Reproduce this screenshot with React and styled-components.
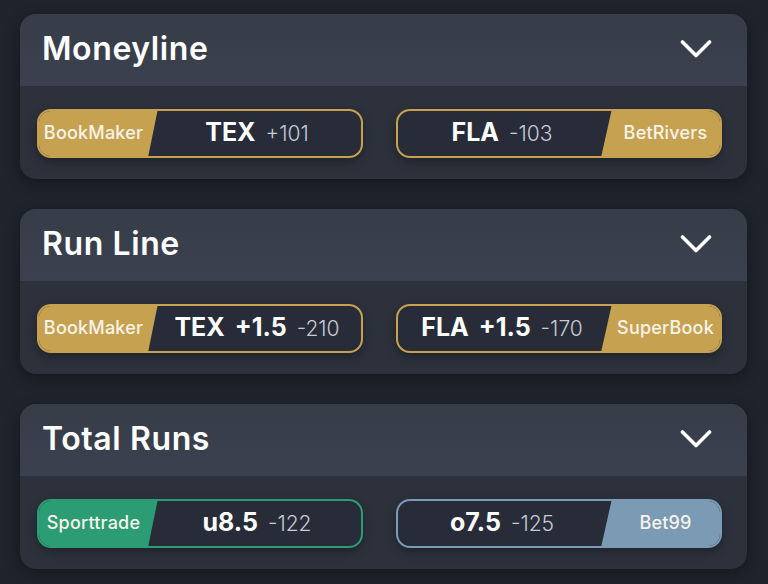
import React from "react";
//Styling
import styled, { createGlobalStyle } from "styled-components";

const markets = [
  {
    title: "Moneyline",
    picks: [
      { book: "BookMaker", side: "left", color: "gold", label: ["TEX"], odds: "+101" },
      { book: "BetRivers", side: "right", color: "gold", label: ["FLA"], odds: "-103" },
    ],
  },
  {
    title: "Run Line",
    picks: [
      { book: "BookMaker", side: "left", color: "gold", label: ["TEX", "+1.5"], odds: "-210" },
      { book: "SuperBook", side: "right", color: "gold", label: ["FLA", "+1.5"], odds: "-170" },
    ],
  },
  {
    title: "Total Runs",
    picks: [
      { book: "Sporttrade", side: "left", color: "green", label: ["u8.5"], odds: "-122" },
      { book: "Bet99", side: "right", color: "blue", label: ["o7.5"], odds: "-125" },
    ],
  },
];

const colors = {
  gold: "#c6a250",
  green: "#2b9c74",
  blue: "#7b9ab3",
};

const Chevron = () => (
  <svg width="32" height="20" viewBox="0 0 32 20" fill="none">
    <path
      d="M2.5 3 L16 16.5 L29.5 3"
      stroke="#ffffff"
      strokeWidth="3.6"
      strokeLinecap="round"
      strokeLinejoin="round"
    />
  </svg>
);

const Pick = ({ pick }) => {
  const badge = (
    <Badge side={pick.side} fill={colors[pick.color]}>
      {pick.book}
    </Badge>
  );

  return (
    <PickButton border={colors[pick.color]}>
      {pick.side === "left" && badge}
      <Line>
        {pick.label.map((part) => (
          <strong key={part}>{part}</strong>
        ))}
        <span>{pick.odds}</span>
      </Line>
      {pick.side === "right" && badge}
    </PickButton>
  );
};

const App = () => {
  return (
    <>
      <GlobalStyle />
      <Page>
        {markets.map((market) => (
          <Card key={market.title}>
            <CardHeader>
              <h2>{market.title}</h2>
              <Chevron />
            </CardHeader>
            <CardBody>
              {market.picks.map((pick) => (
                <Pick pick={pick} key={pick.book + pick.odds} />
              ))}
            </CardBody>
          </Card>
        ))}
      </Page>
    </>
  );
};

const GlobalStyle = createGlobalStyle`
  * {
    box-sizing: border-box;
  }

  body {
    margin: 0;
    background: #1f232c;
    font-family: "Inter", "Noto Sans", sans-serif;
    color: #ffffff;
  }
`;

const Page = styled.div`
  width: 768px;
  height: 584px;
  padding: 14px 20px 0 20px;
  display: flex;
  flex-direction: column;
  gap: 30px;
  overflow: hidden;
`;

const Card = styled.section`
  width: 727px;
  height: 165px;
  border-radius: 16px;
  overflow: hidden;
  background: #2c313c;
  box-shadow: 0 4px 14px rgba(0, 0, 0, 0.35);
  display: flex;
  flex-direction: column;
`;

const CardHeader = styled.div`
  height: 72px;
  padding: 0 35px 0 22px;
  display: flex;
  align-items: center;
  justify-content: space-between;
  background: linear-gradient(180deg, #363c48 0%, #3b414e 100%);

  h2 {
    margin: 0;
    font-size: 32px;
    font-weight: 600;
    letter-spacing: 0.6px;
    padding-bottom: 4px;
  }

  svg {
    margin-top: -2px;
  }
`;

const CardBody = styled.div`
  flex: 1;
  padding: 1px 25px 0 17px;
  display: flex;
  align-items: center;
  justify-content: space-between;
`;

const PickButton = styled.div`
  width: 326px;
  height: 49px;
  display: flex;
  border: 2px solid ${(props) => props.border};
  border-radius: 14px;
  overflow: hidden;
  background: #272c38;
  box-shadow: 0 4px 10px rgba(0, 0, 0, 0.3);
`;

const Badge = styled.div`
  width: 121px;
  flex-shrink: 0;
  display: flex;
  align-items: center;
  justify-content: center;
  background: ${(props) => props.fill};
  font-size: 18px;
  font-weight: 500;
  letter-spacing: 0.2px;
  color: #f7f3ea;
  padding: ${(props) => (props.side === "left" ? "0 8px 2px 0" : "0 0 2px 8px")};
  clip-path: ${(props) =>
    props.side === "left"
      ? "polygon(0 0, 100% 0, calc(100% - 10px) 100%, 0 100%)"
      : "polygon(11px 0, 100% 0, 100% 100%, 0 100%)"};
  margin: ${(props) => (props.side === "left" ? "-2px -5px -2px -2px" : "-2px -2px -2px -5px")};
`;

const Line = styled.div`
  flex: 1;
  align-self: center;
  display: flex;
  align-items: baseline;
  justify-content: center;
  gap: 10px;
  padding-bottom: 3px;

  strong {
    font-size: 25px;
    font-weight: 700;
    color: #ffffff;
  }

  span {
    font-size: 21px;
    font-weight: 300;
    color: #c6cbd4;
  }
`;

export default App;
